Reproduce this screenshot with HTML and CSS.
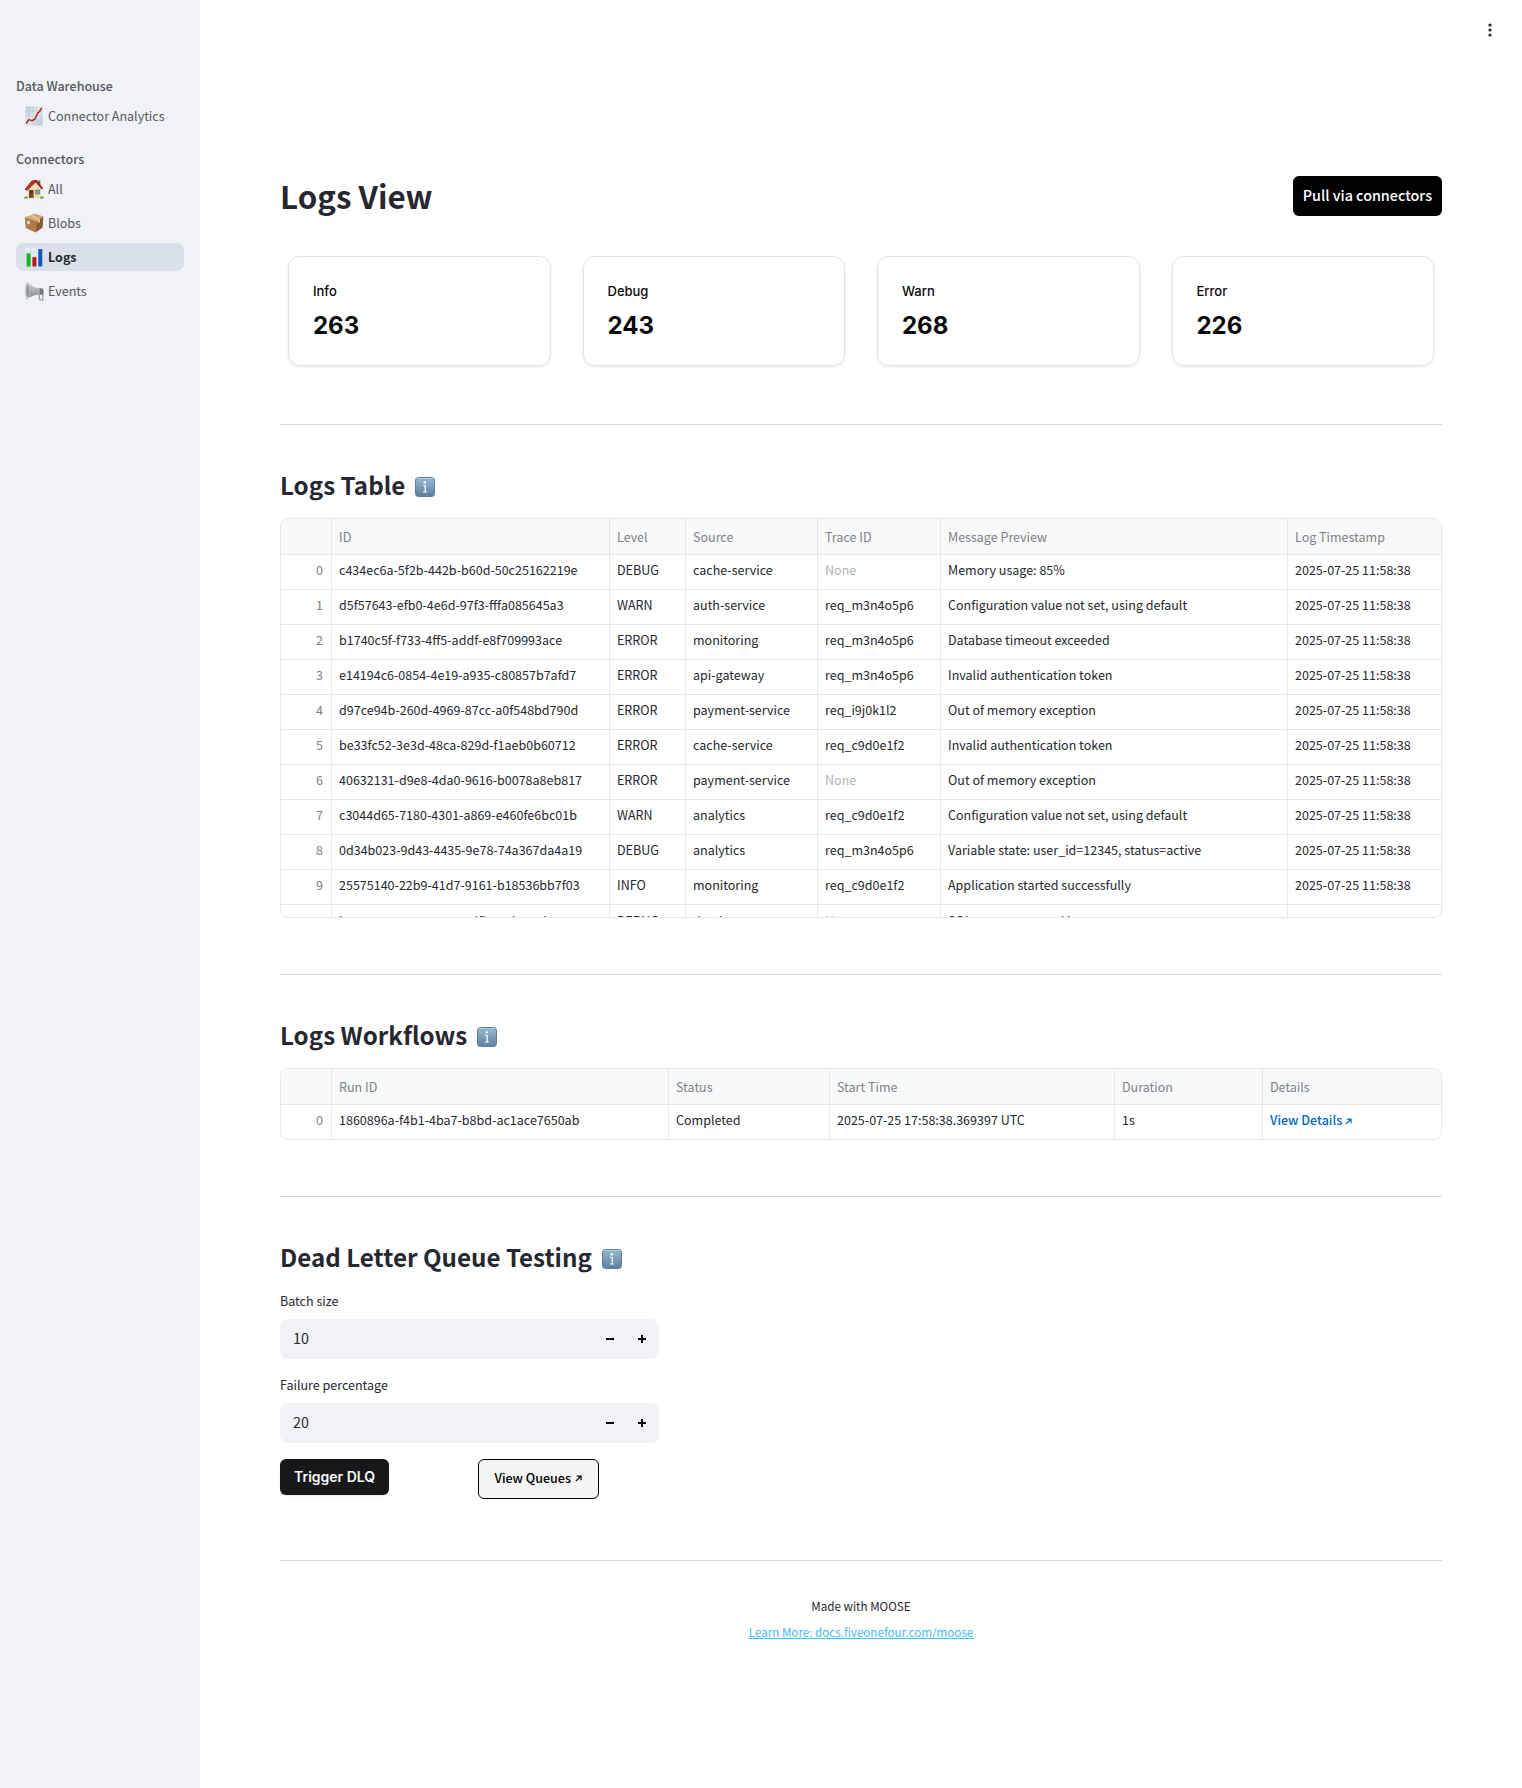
FILE: index.html
```html
<!DOCTYPE html>
<html lang="en">
<head>
<meta charset="utf-8">
<meta name="viewport" content="width=device-width, initial-scale=1">
<title>Logs View</title>
<link rel="stylesheet" href="styles.css">
</head>
<body>
<svg class="defs" aria-hidden="true">
  <defs>
    <linearGradient id="infoBlue" x1="0" y1="0" x2="0" y2="1">
      <stop offset="0" stop-color="#7fa0bf"/><stop offset="0.15" stop-color="#8fb2cf"/><stop offset="1" stop-color="#5f7f9c"/>
    </linearGradient>
    <linearGradient id="paper" x1="0" y1="0" x2="1" y2="1">
      <stop offset="0" stop-color="#b9ccd6"/><stop offset="0.5" stop-color="#e0eaef"/><stop offset="1" stop-color="#b9cad4"/>
    </linearGradient>
    <linearGradient id="horn" x1="0" y1="0" x2="0" y2="1">
      <stop offset="0" stop-color="#d4d6d8"/><stop offset="0.5" stop-color="#a9acae"/><stop offset="1" stop-color="#85888a"/>
    </linearGradient>
    <symbol id="info" viewBox="0 0 20 20">
      <rect x="0.5" y="0.5" width="19" height="19" rx="3" fill="url(#infoBlue)" stroke="#5c7c99"/>
      <path d="M2 1.5h16" stroke="#b9d0e2" stroke-width="1"/>
      <circle cx="9.8" cy="5.4" r="1.2" fill="#fff"/>
      <path d="M8.2 8.5h2v6.2M8 15h4" fill="none" stroke="#fff" stroke-width="1.2"/>
    </symbol>
    <symbol id="arrow" viewBox="0 0 8 8">
      <path d="M1 7 6.6 1.4M2 1.2h4.9v4.9" fill="none" stroke="currentColor" stroke-width="1.4"/>
    </symbol>
  </defs>
</svg>
<div class="app">
  <nav class="sidebar" aria-label="Pages">
    <section class="nav-group">
      <h2 class="nav-title">Data Warehouse</h2>
      <a class="nav-link" href="#analytics">
        <svg class="emoji" viewBox="0 0 20 20" aria-hidden="true">
          <rect x="1.5" y="0.5" width="17" height="19" fill="url(#paper)"/>
          <path d="M5 .5v19M9 .5v19M13 .5v19M1.5 5h17M1.5 10h17M1.5 15h17" stroke="#b3c6d0" stroke-width="0.5"/>
          <path d="M2.2 17.5 4.8 13.6 8 14.6 11 13 13.6 7.2 15.2 6 17.8 1.8" fill="none" stroke="#c4161c" stroke-width="1.5" stroke-linejoin="round"/>
        </svg>
        <span>Connector Analytics</span>
      </a>
    </section>
    <section class="nav-group">
      <h2 class="nav-title">Connectors</h2>
      <a class="nav-link" href="#all">
        <svg class="emoji" viewBox="0 0 20 20" aria-hidden="true">
          <path d="M3.5 10 10 3.4l6.8 6.6V19H3.5z" fill="#f1dcae"/>
          <path d="M14 1.6h2.4v5.2L14 4.4z" fill="#a5552f"/>
          <path d="M.8 10.2 8 1.4 12.6.8l6.6 8.6-1.4 1.2-6.2-7L3 11.8z" fill="#8f2a24"/>
          <path d="M8 1.4 11 3.4 3 11.8.8 10.2z" fill="#b0352a"/>
          <rect x="5" y="11" width="4.6" height="8" fill="#7a4a2a"/>
          <rect x="6" y="12" width="2.6" height="2.6" fill="#4a3326"/>
          <rect x="11.4" y="11" width="4.4" height="4" fill="#5da2d8" stroke="#8a6a48" stroke-width="0.6"/>
          <path d="M.3 19.5c0-3 3.2-3 3.6 0zM16 19.5c0-3 3.6-3 3.8 0z" fill="#5b9a32"/>
        </svg>
        <span>All</span>
      </a>
      <a class="nav-link" href="#blobs">
        <svg class="emoji" viewBox="0 0 20 20" aria-hidden="true">
          <path d="M.8 4.2 11.2.6l8.2 3-6.8 4.6z" fill="#d3a574"/>
          <path d="M.8 4.2 12.6 8.2 11.6 19.6 1.8 15z" fill="#b27a45"/>
          <path d="M12.6 8.2 19.4 3.6 18.6 14.6 11.6 19.6z" fill="#8a5a30"/>
          <path d="M5.2 2.7 8 1.7 16 5.9v3l-2.2 1.5V7.3z" fill="#dfc39a"/>
          <rect x="3.2" y="7.8" width="2.6" height="3.4" fill="#e4dccb"/>
        </svg>
        <span>Blobs</span>
      </a>
      <a class="nav-link nav-link-active" href="#logs" aria-current="page">
        <svg class="emoji" viewBox="0 0 20 20" aria-hidden="true">
          <rect x="1.5" y="0.5" width="17" height="19" fill="#e3ecf1"/>
          <path d="M1.5 5h17M1.5 10h17M1.5 15h17M7 .5v19M13 .5v19" stroke="#c9d7df" stroke-width="0.5"/>
          <rect x="2.6" y="6.4" width="4" height="13.1" fill="#17b01f"/>
          <rect x="8.4" y="10.2" width="4" height="9.3" fill="#c3121a"/>
          <rect x="14.3" y="2" width="4" height="17.5" fill="#0e56c4"/>
        </svg>
        <span>Logs</span>
      </a>
      <a class="nav-link" href="#events">
        <svg class="emoji" viewBox="0 0 20 20" aria-hidden="true">
          <path d="M15 12.5h3.8v6.3H15.6z" fill="none" stroke="#8fa0ad" stroke-width="1.3"/>
          <path d="M3.4 1C7 5 12 7.6 18.6 7.2c1.4 2 1.3 4.2.2 6.2C12 13.2 6.6 14.6 2.6 18.6 1 13 1.4 6 3.4 1z" fill="url(#horn)"/>
          <ellipse cx="3.4" cy="9.8" rx="2.2" ry="8.8" fill="#c7c9cb"/>
          <ellipse cx="3.6" cy="10" rx="1.3" ry="6" fill="#8c8f91"/>
          <path d="M15.6 7.4h3c1.2 2 1.2 4 .2 6h-3z" fill="#75797c"/>
        </svg>
        <span>Events</span>
      </a>
    </section>
  </nav>

  <div class="page">
    <header class="toolbar">
      <button class="menu-button" type="button" aria-label="Main menu">
        <svg width="16" height="16" viewBox="0 0 16 16" fill="currentColor" aria-hidden="true"><circle cx="8" cy="3" r="1.6"/><circle cx="8" cy="8" r="1.6"/><circle cx="8" cy="13" r="1.6"/></svg>
      </button>
    </header>

    <main class="content">
      <div class="title-row">
        <h1>Logs View</h1>
        <button class="pull-button" type="button">Pull via connectors</button>
      </div>

      <div class="metrics">
        <article class="metric"><h3>Info</h3><p>263</p></article>
        <article class="metric"><h3>Debug</h3><p>243</p></article>
        <article class="metric"><h3>Warn</h3><p>268</p></article>
        <article class="metric"><h3>Error</h3><p>226</p></article>
      </div>

      <section class="block">
        <h2 class="block-title">Logs Table <svg class="info" role="img" aria-label="Info"><use href="#info"/></svg></h2>
        <div class="table-frame table-frame-scroll">
          <table class="logs">
            <colgroup><col class="c-index"><col class="c-id"><col class="c-level"><col class="c-source"><col class="c-trace"><col><col class="c-time"></colgroup>
            <thead><tr><th></th><th>ID</th><th>Level</th><th>Source</th><th>Trace ID</th><th>Message Preview</th><th>Log Timestamp</th></tr></thead>
            <tbody>
              <tr><td>0</td><td>c434ec6a-5f2b-442b-b60d-50c25162219e</td><td>DEBUG</td><td>cache-service</td><td class="none">None</td><td>Memory usage: 85%</td><td>2025-07-25 11:58:38</td></tr>
              <tr><td>1</td><td>d5f57643-efb0-4e6d-97f3-fffa085645a3</td><td>WARN</td><td>auth-service</td><td>req_m3n4o5p6</td><td>Configuration value not set, using default</td><td>2025-07-25 11:58:38</td></tr>
              <tr><td>2</td><td>b1740c5f-f733-4ff5-addf-e8f709993ace</td><td>ERROR</td><td>monitoring</td><td>req_m3n4o5p6</td><td>Database timeout exceeded</td><td>2025-07-25 11:58:38</td></tr>
              <tr><td>3</td><td>e14194c6-0854-4e19-a935-c80857b7afd7</td><td>ERROR</td><td>api-gateway</td><td>req_m3n4o5p6</td><td>Invalid authentication token</td><td>2025-07-25 11:58:38</td></tr>
              <tr><td>4</td><td>d97ce94b-260d-4969-87cc-a0f548bd790d</td><td>ERROR</td><td>payment-service</td><td>req_i9j0k1l2</td><td>Out of memory exception</td><td>2025-07-25 11:58:38</td></tr>
              <tr><td>5</td><td>be33fc52-3e3d-48ca-829d-f1aeb0b60712</td><td>ERROR</td><td>cache-service</td><td>req_c9d0e1f2</td><td>Invalid authentication token</td><td>2025-07-25 11:58:38</td></tr>
              <tr><td>6</td><td>40632131-d9e8-4da0-9616-b0078a8eb817</td><td>ERROR</td><td>payment-service</td><td class="none">None</td><td>Out of memory exception</td><td>2025-07-25 11:58:38</td></tr>
              <tr><td>7</td><td>c3044d65-7180-4301-a869-e460fe6bc01b</td><td>WARN</td><td>analytics</td><td>req_c9d0e1f2</td><td>Configuration value not set, using default</td><td>2025-07-25 11:58:38</td></tr>
              <tr><td>8</td><td>0d34b023-9d43-4435-9e78-74a367da4a19</td><td>DEBUG</td><td>analytics</td><td>req_m3n4o5p6</td><td>Variable state: user_id=12345, status=active</td><td>2025-07-25 11:58:38</td></tr>
              <tr><td>9</td><td>25575140-22b9-41d7-9161-b18536bb7f03</td><td>INFO</td><td>monitoring</td><td>req_c9d0e1f2</td><td>Application started successfully</td><td>2025-07-25 11:58:38</td></tr>
              <tr><td>10</td><td>bc0a0413-ee41-4a15-8dfb-7cd101ab03ee</td><td>DEBUG</td><td>database</td><td class="none">None</td><td>SQL query executed in 45ms</td><td>2025-07-25 11:58:38</td></tr>
            </tbody>
          </table>
        </div>
      </section>

      <section class="block">
        <h2 class="block-title">Logs Workflows <svg class="info" role="img" aria-label="Info"><use href="#info"/></svg></h2>
        <div class="table-frame">
          <table class="workflows">
            <colgroup><col class="c-index"><col class="c-run"><col class="c-status"><col class="c-start"><col class="c-duration"><col></colgroup>
            <thead><tr><th></th><th>Run ID</th><th>Status</th><th>Start Time</th><th>Duration</th><th>Details</th></tr></thead>
            <tbody>
              <tr><td>0</td><td>1860896a-f4b1-4ba7-b8bd-ac1ace7650ab</td><td>Completed</td><td>2025-07-25 17:58:38.369397 UTC</td><td>1s</td><td><a class="details" href="#details">View Details <svg class="arrow" aria-hidden="true"><use href="#arrow"/></svg></a></td></tr>
            </tbody>
          </table>
        </div>
      </section>

      <section class="block">
        <h2 class="block-title">Dead Letter Queue Testing <svg class="info" role="img" aria-label="Info"><use href="#info"/></svg></h2>
        <form class="dlq">
          <div class="field">
            <label for="batch">Batch size</label>
            <div class="number">
              <input id="batch" type="text" inputmode="numeric" value="10">
              <button type="button" aria-label="Decrease batch size"><svg width="8" height="8" viewBox="0 0 8 8" aria-hidden="true"><path d="M0 3h8v2H0z"/></svg></button>
              <button type="button" aria-label="Increase batch size"><svg width="8" height="8" viewBox="0 0 8 8" aria-hidden="true"><path d="M0 3h3V0h2v3h3v2H5v3H3V5H0z"/></svg></button>
            </div>
          </div>
          <div class="field">
            <label for="failure">Failure percentage</label>
            <div class="number">
              <input id="failure" type="text" inputmode="numeric" value="20">
              <button type="button" aria-label="Decrease failure percentage"><svg width="8" height="8" viewBox="0 0 8 8" aria-hidden="true"><path d="M0 3h8v2H0z"/></svg></button>
              <button type="button" aria-label="Increase failure percentage"><svg width="8" height="8" viewBox="0 0 8 8" aria-hidden="true"><path d="M0 3h3V0h2v3h3v2H5v3H3V5H0z"/></svg></button>
            </div>
          </div>
          <div class="actions">
            <div><button class="trigger" type="button">Trigger DLQ</button></div>
            <div><a class="queues" href="#queues">View Queues <svg class="arrow" aria-hidden="true"><use href="#arrow"/></svg></a></div>
          </div>
        </form>
      </section>

      <footer class="footer">
        <p>Made with MOOSE</p>
        <a href="#moose">Learn More: docs.fiveonefour.com/moose</a>
      </footer>
    </main>
  </div>
</div>
</body>
</html>
```
FILE: styles.css
```css
:root {
  --text: #262730;
  --muted: #7f8188;
  --line: #e6e7e9;
  --panel: #f0f2f6;
  --sans: "Source Sans Pro", "Noto Sans CJK JP", sans-serif;
  --ui: Inter, "Liberation Sans", sans-serif;
}

* { box-sizing: border-box; }

/* font-size-adjust keeps the fallback family at Source Sans proportions */
body {
  margin: 0;
  background: #fff;
  color: var(--text);
  font-family: var(--sans);
  font-size: 14px;
  font-size-adjust: 0.486;
  line-height: 20px;
}

h1, h2, h3, p { margin: 0; }
a { color: inherit; text-decoration: none; }
button, input { font: inherit; font-size-adjust: inherit; color: inherit; }
button { cursor: pointer; }

.defs { position: absolute; width: 0; height: 0; }

.app { display: flex; min-height: 100vh; }

.sidebar {
  flex: none;
  width: 200px;
  padding: 76px 16px 32px;
  background: var(--panel);
  color: #55575f;
}
.nav-group { display: flex; flex-direction: column; gap: 6px; margin-bottom: 19px; }
.nav-title { font-size: 14px; font-weight: 500; line-height: 20px; }
.nav-link {
  display: flex;
  align-items: center;
  gap: 4px;
  height: 28px;
  padding: 0 8px;
  border-radius: 8px;
}
.nav-link-active { background: #dae0ea; color: var(--text); font-weight: 700; }
.emoji { width: 20px; height: 20px; }

.page { flex: 1; min-width: 0; }
.toolbar { display: flex; justify-content: flex-end; height: 60px; padding: 14px 16px; }
.menu-button {
  display: grid;
  place-items: center;
  width: 32px;
  height: 32px;
  padding: 0;
  border: 0;
  background: none;
}

.content { padding: 116px 80px 120px; }

.title-row { display: flex; justify-content: space-between; align-items: center; }
h1 { font-size: 35px; font-weight: 600; line-height: 40px; }
.pull-button {
  height: 40px;
  padding: 0 10px 2px;
  border: 0;
  border-radius: 6px;
  background: #000;
  color: #fff;
  font-size: 16px;
  font-weight: 500;
}

.metrics { display: grid; grid-template-columns: repeat(4, 1fr); gap: 16px; margin-top: 40px; }
.metric {
  height: 110px;
  margin: 0 8px;
  padding: 24px;
  border: 1px solid #e4e4e7;
  border-radius: 12px;
  box-shadow: 0 1px 3px rgba(0, 0, 0, 0.1);
  color: #09090b;
  font-family: var(--ui);
  font-size-adjust: none;
}
.metric h3 { font-size: 13px; font-weight: 500; line-height: 21px; }
.metric p { margin-top: 8px; font-size: 24px; font-weight: 700; line-height: 32px; }

.block { margin-top: 56px; border-top: 1px solid #d5d6d8; padding-top: 40px; }
.metrics + .block { margin-top: 58px; }
.block-title {
  display: flex;
  align-items: center;
  gap: 10px;
  padding-bottom: 5px;
  font-size: 27px;
  font-weight: 600;
  line-height: 40px;
}
.info { width: 20px; height: 20px; margin-top: 4px; }

.table-frame {
  margin-top: 8px;
  overflow: hidden;
  border: 1px solid var(--line);
  border-radius: 8px;
}
.table-frame-scroll { height: 400px; }
table { width: 100%; border-collapse: separate; border-spacing: 0; table-layout: fixed; }
th, td {
  height: 35px;
  padding: 0 7px;
  border-right: 1px solid var(--line);
  border-bottom: 1px solid var(--line);
  overflow: hidden;
  font-weight: 400;
  text-align: left;
  white-space: nowrap;
}
th { height: 36px; background: #f8f9fb; color: var(--muted); }
td { padding-bottom: 4px; }
th:last-child, td:last-child { border-right: 0; }
td:first-child { padding-right: 8px; color: var(--muted); text-align: right; }
tbody tr:last-child td { border-bottom: 0; }
.workflows tbody td { height: 34px; }
.none { color: #b1b2b6; }
.c-index { width: 51px; }
.c-id { width: 278px; }
.c-level { width: 76px; }
.c-source { width: 132px; }
.c-trace { width: 123px; }
.c-time { width: 153px; }
.c-run { width: 337px; }
.c-status { width: 161px; }
.c-start { width: 285px; }
.c-duration { width: 148px; }
.details { color: #0068c9; font-weight: 500; }
.arrow { width: 7px; height: 7px; }

.dlq { display: flex; flex-direction: column; gap: 16px; max-width: 379px; margin-top: 9px; }
.field label { display: block; height: 28px; line-height: 20px; }
.number {
  display: flex;
  height: 40px;
  padding-right: 1px;
  overflow: hidden;
  border-radius: 8px;
  background: var(--panel);
}
.number input {
  flex: 1;
  min-width: 0;
  padding: 0 13px 2px;
  border: 0;
  background: none;
  font-size: 16px;
}
.number button {
  display: grid;
  place-items: center;
  width: 32px;
  padding: 0;
  border: 0;
  background: none;
}
.actions { display: grid; grid-template-columns: 1fr 1fr; gap: 16px; }
.trigger {
  height: 36px;
  padding: 0 14px;
  border: 0;
  border-radius: 6px;
  background: #18181b;
  box-shadow: 0 1px 2px rgba(0, 0, 0, 0.1);
  color: #fafafa;
  font-family: var(--ui);
  font-size: 14px;
  font-size-adjust: none;
  font-weight: 600;
}
.queues {
  display: inline-flex;
  align-items: center;
  gap: 4px;
  height: 40px;
  padding: 0 16px 2px;
  border: 1px solid #000;
  border-radius: 6px;
  background: #f4f4f4;
  color: #000;
  font-weight: 500;
}

.footer {
  display: flex;
  flex-direction: column;
  align-items: center;
  gap: 6px;
  margin-top: 61px;
  padding-top: 35px;
  border-top: 1px solid #d5d6d8;
  font-size: 13px;
}
.footer a { color: #42bdf5; text-decoration: underline; }
```
